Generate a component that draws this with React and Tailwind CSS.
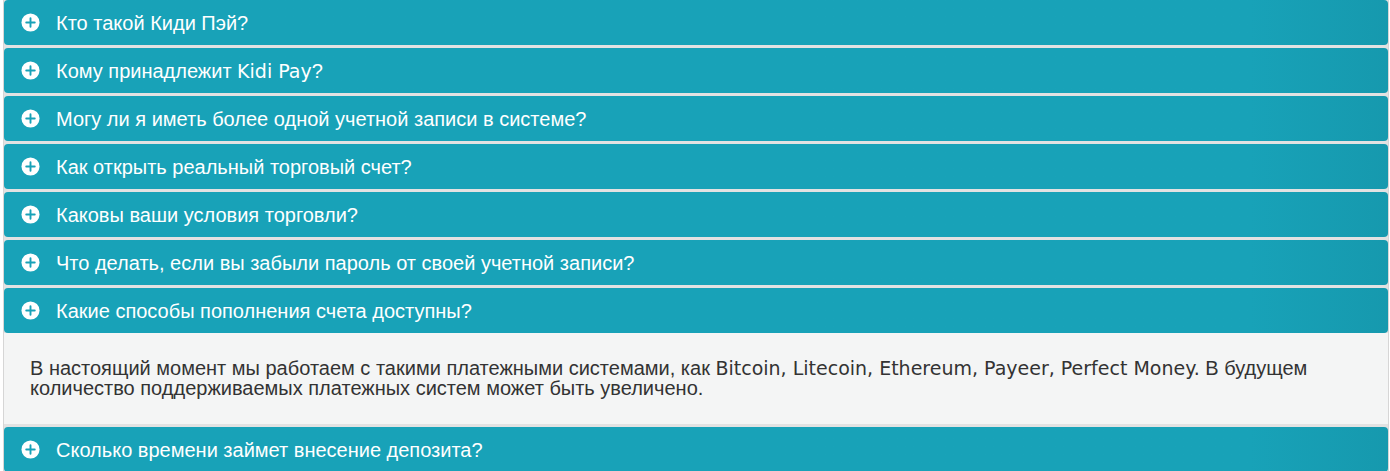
import { useState } from 'react';

const latin = 'font-["DejaVu_Sans",sans-serif] text-[19px]';

const faq = [
  { q: ['Кто такой Киди Пэй?'] },
  { q: ['Кому принадлежит ', { l: 'Kidi Pay' }, '?'] },
  { q: ['Могу ли я иметь более одной учетной записи в системе?'] },
  { q: ['Как открыть реальный торговый счет?'] },
  { q: ['Каковы ваши условия торговли?'] },
  { q: ['Что делать, если вы забыли пароль от своей учетной записи?'] },
  {
    q: ['Какие способы пополнения счета доступны?'],
    a: [
      'В настоящий момент мы работаем с такими платежными системами, как ',
      { l: 'Bitcoin, Litecoin, Ethereum, Payeer, Perfect Money.' },
      ' В будущем',
      { br: true },
      'количество поддерживаемых платежных систем может быть увеличено.',
    ],
  },
  { q: ['Сколько времени займет внесение депозита?'] },
];

function Mixed({ parts }) {
  return parts.map((p, i) => {
    if (typeof p === 'string') return <span key={i}>{p}</span>;
    if (p.br) return <br key={i} />;
    return (
      <span key={i} className={latin}>
        {p.l}
      </span>
    );
  });
}

function PlusCircle() {
  return (
    <svg width="19" height="19" viewBox="0 0 20 20" className="shrink-0">
      <circle cx="10" cy="10" r="9.5" fill="#fff" />
      <path d="M10 5.5v9M5.5 10h9" stroke="#18a2b8" strokeWidth="2" strokeLinecap="round" />
    </svg>
  );
}

export default function App() {
  const [open, setOpen] = useState(6);

  return (
    <div className="w-[1390px] h-[471px] overflow-hidden bg-white font-['Liberation_Sans',Arial,sans-serif]">
      <div className="ml-[3px] mr-[1px] border-l border-r border-[#d6d6d6] bg-[#e2e2e2] flex flex-col gap-[3px]">
        {faq.map((item, i) => (
          <div key={i} className="flex flex-col">
            <button
              onClick={() => setOpen(open === i ? -1 : i)}
              className="h-[45px] flex items-center gap-4 pl-[17px] text-left text-white text-[20px] rounded-[4px] bg-gradient-to-r from-[#18a2b8] from-90% to-[#1699ae]"
            >
              <PlusCircle />
              <span className="leading-none">
                <Mixed parts={item.q} />
              </span>
            </button>
            {open === i && item.a && (
              <div className="bg-[#f4f5f5] h-[91px] pl-[26px] pr-6 pt-[25px] text-[20px] leading-[20px] text-[#333]">
                <Mixed parts={item.a} />
              </div>
            )}
          </div>
        ))}
      </div>
    </div>
  );
}
